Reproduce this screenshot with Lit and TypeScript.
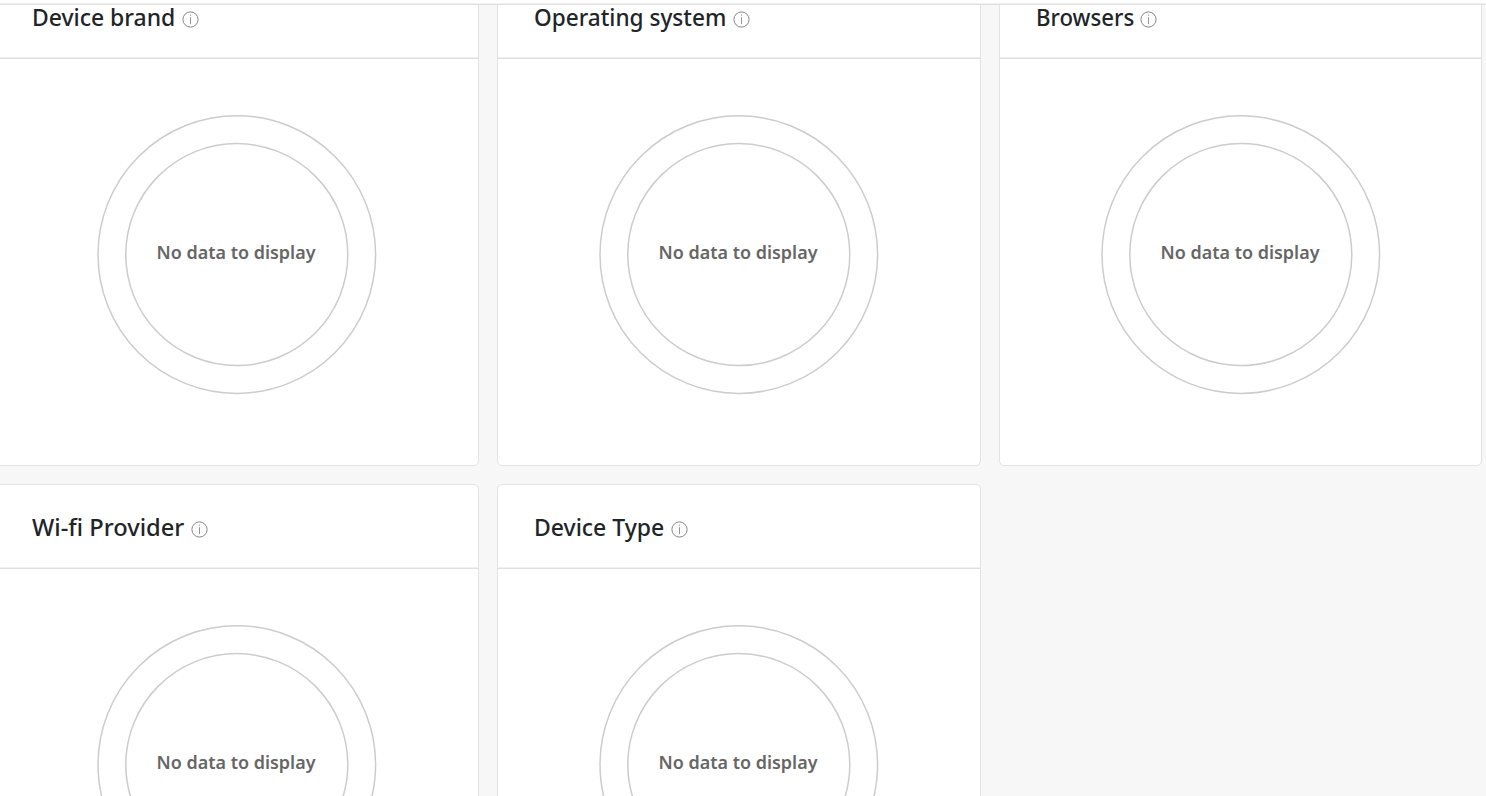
import { LitElement, html, css } from "lit";
import { customElement, property } from "lit/decorators.js";

@customElement("empty-donut")
class EmptyDonut extends LitElement {
  static styles = css`
    :host { display: block; }
    svg { display: block; width: 280px; height: 280px; }
    circle { fill: none; stroke: #cccccc; stroke-width: 1.5; }
    text {
      font: 600 18.4px "Noto Sans", "Open Sans", sans-serif;
      fill: #666666;
      text-anchor: middle;
    }
  `;
  render() {
    return html`
      <svg viewBox="0 0 280 280">
        <circle cx="139.8" cy="139.6" r="138.8"></circle>
        <circle cx="139.8" cy="139.6" r="111"></circle>
        <text x="139" y="144" textLength="159" lengthAdjust="spacingAndGlyphs">No data to display</text>
      </svg>
    `;
  }
}

@customElement("stat-card")
class StatCard extends LitElement {
  @property() heading = "";
  @property({ type: Number }) width = 0;
  static styles = css`
    :host {
      display: flex;
      flex-direction: column;
      box-sizing: border-box;
      height: 492px;
      background: #fff;
      border: 1px solid #e3e3e3;
      border-radius: 5px;
      overflow: hidden;
    }
    header {
      display: flex;
      box-sizing: border-box;
      height: 84px;
      flex: none;
      padding: 26px 0 0 36px;
      border-bottom: 1px solid #e0e0e0;
      box-shadow: inset 0 -1px 0 #f0f0f0;
    }
    .title { display: block; height: 34px; flex: none; overflow: visible; }
    .title text {
      font: 500 23px "Noto Sans", "Open Sans", sans-serif;
      fill: #212529;
    }
    .info { display: block; width: 17px; height: 17px; margin: 10px 0 0 6.5px; flex: none; }
    .body { display: flex; padding: 56px 0 0 101px; }
  `;
  render() {
    return html`
      <header>
        <svg class="title" width=${this.width} height="34">
          <text x="0" y="25" textLength=${this.width} lengthAdjust="spacingAndGlyphs">${this.heading}</text>
        </svg>
        <svg class="info" viewBox="0 0 17 17">
          <circle cx="8.5" cy="8.5" r="7.6" fill="none" stroke="#777" stroke-width="0.9"></circle>
          <path d="M8.5 6.2V13.2" stroke="#888" stroke-width="0.9"></path>
          <circle cx="8.5" cy="4.1" r="0.7" fill="#888"></circle>
        </svg>
      </header>
      <div class="body"><empty-donut></empty-donut></div>
    `;
  }
}

@customElement("app-root")
class AppRoot extends LitElement {
  static styles = css`
    :host {
      display: flex;
      flex-direction: column;
      height: 796px;
      overflow: hidden;
      background: #f7f7f7;
    }
    .bar {
      box-sizing: border-box;
      height: 5px;
      flex: none;
      background: #fff;
      border-bottom: 1px solid #e0e0e0;
      box-shadow: inset 0 -1px 0 #f0f0f0;
    }
    .view { flex: 1; min-height: 0; overflow: hidden; }
    .grid {
      display: grid;
      grid-template-columns: repeat(3, 483.66px);
      gap: 18px;
      margin: -31px 0 0 -4.66px;
    }
  `;
  private cards = [
    { title: "Device brand", width: 143.3 },
    { title: "Operating system", width: 192.3 },
    { title: "Browsers", width: 98.3 },
    { title: "Wi-fi Provider", width: 152.3 },
    { title: "Device Type", width: 130.3 },
  ];
  render() {
    return html`
      <div class="bar"></div>
      <div class="view">
        <div class="grid">
          ${this.cards.map((c) => html`<stat-card heading=${c.title} width=${c.width}></stat-card>`)}
        </div>
      </div>
    `;
  }
}
